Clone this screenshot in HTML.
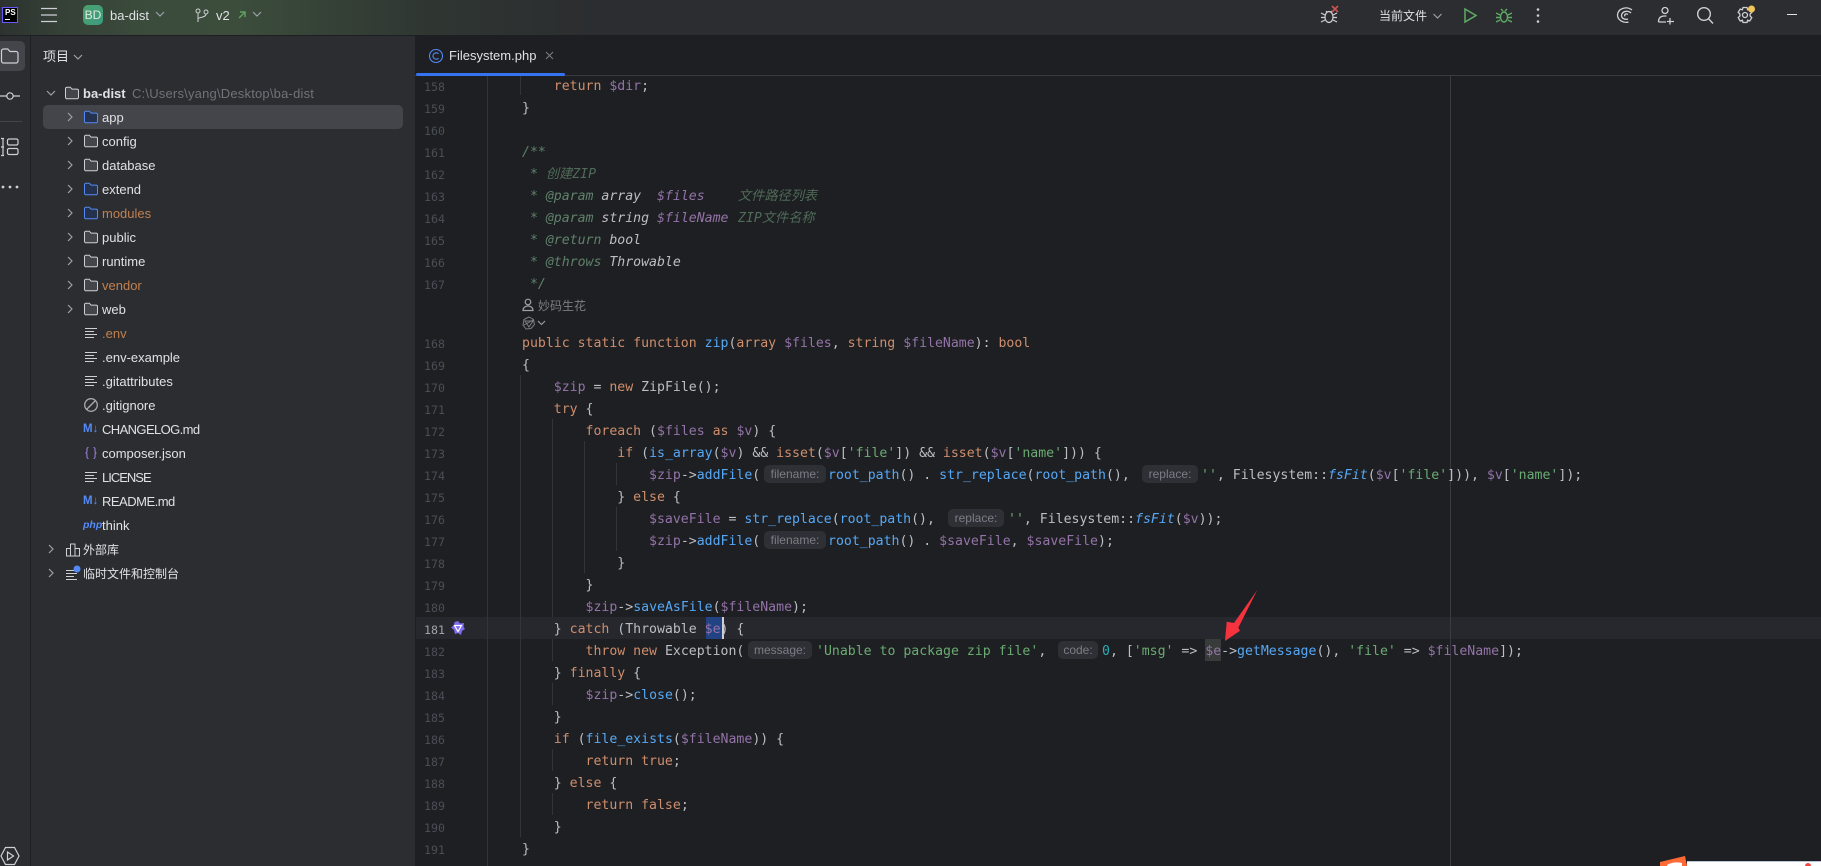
<!DOCTYPE html>
<html lang="zh"><head><meta charset="utf-8"><title>ba-dist – Filesystem.php</title>
<style>
html,body{margin:0;padding:0;background:#1e1f22}
#r{position:relative;width:1821px;height:866px;overflow:hidden;background:#1e1f22;font-family:"Liberation Sans","Noto Sans CJK SC",sans-serif;filter:blur(.25px)}
.a{position:absolute}
.a svg,svg.a{display:block}
#top{left:0;top:0;width:1821px;height:35px;background:linear-gradient(90deg,#2d3230 0,#354036 60px,#3b4c3c 150px,#3c4d3c 240px,#354136 330px,#2f3632 430px,#2b2d30 600px);border-bottom:1px solid #1e1f22}
#stripe{left:0;top:36px;width:30px;height:830px;background:#2b2d30;border-right:1px solid #1e1f22}
#panel{left:31px;top:36px;width:384px;height:830px;background:#2b2d30;border-right:1px solid #1e1f22}
.t{position:absolute;white-space:pre;font-size:13px;line-height:24px;height:24px;color:#dfe1e5;margin-top:1px}
.o{color:#c2804f}
.ti{position:absolute;white-space:pre;color:#dfe1e5}
.l,.n,.in{position:absolute;white-space:pre;height:22px;line-height:22px}
.l{font-family:"DejaVu Sans Mono","Noto Sans CJK SC",monospace;font-size:13.2px;color:#bcbec4;margin-top:2px}
.n{left:414px;width:31px;text-align:right;font-family:"DejaVu Sans Mono",monospace;font-size:11.6px;color:#4a4e56;margin-top:2px}
.in{font-family:"Liberation Sans",sans-serif;font-size:12px;color:#7a7e85;background:#2e3035;border-radius:5px;height:18px;line-height:18px;text-align:center}
.k{color:#cf8e6d}.v{color:#9373a8}.f{color:#56a8f5}.s{color:#6aab73}.d{color:#5f826b;font-style:italic}.di{color:#bcbec4;font-style:italic}.dv{color:#9373a8;font-style:italic}.fi{color:#56a8f5;font-style:italic}.c{color:#2aacb8}.dc{color:#4f6b58;font-style:italic}
.g{position:absolute;width:1px;background:#313438}
.md{position:absolute;left:83px;font:bold 11.5px/16px 'Liberation Sans',sans-serif;color:#548af7;white-space:pre}
</style></head><body>
<div id="r">
<svg width="0" height="0" style="position:absolute">
<symbol id="fd" viewBox="0 0 16 16"><path d="M1.5 3.7A1.5 1.5 0 0 1 3 2.2h3.3l1.8 1.9H13a1.5 1.5 0 0 1 1.5 1.5v6.7a1.5 1.5 0 0 1-1.5 1.5H3a1.5 1.5 0 0 1-1.5-1.5z" fill="#43454a" stroke="#ced0d6" stroke-width="1"/></symbol>
<symbol id="fb" viewBox="0 0 16 16"><path d="M1.5 3.7A1.5 1.5 0 0 1 3 2.2h3.3l1.8 1.9H13a1.5 1.5 0 0 1 1.5 1.5v6.7a1.5 1.5 0 0 1-1.5 1.5H3a1.5 1.5 0 0 1-1.5-1.5z" fill="#25324d" stroke="#548af7" stroke-width="1"/></symbol>
<symbol id="tx" viewBox="0 0 16 16"><path d="M2 3.5h12M2 6.5h9M2 9.5h12M2 12.5h9" stroke="#ced0d6" stroke-width="1" fill="none"/></symbol>
<symbol id="cr" viewBox="0 0 10 10"><path d="M3 1l4 4-4 4" fill="none" stroke="#9da0a8" stroke-width="1.2"/></symbol>
<symbol id="cd" viewBox="0 0 10 10"><path d="M1 3l4 4 4-4" fill="none" stroke="#9da0a8" stroke-width="1.2"/></symbol>
</svg>

<div class="a" id="top"></div>
<div class="a" id="stripe"></div>
<div class="a" id="panel"></div>

<!-- title bar -->
<div class="a" style="left:2px;top:7px;width:14px;height:14px;background:#000;border:1px solid #6b57ff"></div>
<div class="a" style="left:5px;top:8px;color:#fff;font:bold 8px/9px 'Liberation Sans',sans-serif">PS</div>
<div class="a" style="left:5px;top:19px;width:5px;height:1px;background:#fff"></div>
<svg class="a" style="left:41px;top:7px" width="17" height="17"><path d="M0 1.5h16M0 8h16M0 14.500h16" stroke="#ced0d6" stroke-width="1.300"/></svg>
<div class="a" style="left:83px;top:5px;width:20px;height:20px;border-radius:5px;background:linear-gradient(135deg,#4aa26e,#3d9a80);color:#dfe8e0;font-size:12px;line-height:20px;text-align:center">BD</div>
<div class="ti" style="left:110px;top:7px;font-size:13px;line-height:18px">ba-dist</div>
<svg class="a" style="left:155px;top:9px" width="10" height="10"><use href="#cd"/></svg>
<svg class="a" style="left:195px;top:8px" width="14" height="15"><g fill="none" stroke="#ced0d6" stroke-width="1"><circle cx="3" cy="3" r="2"/><circle cx="11" cy="4" r="2"/><path d="M3 5v9M3 11c0-2 8-1 8-5"/></g></svg>
<div class="ti" style="left:216px;top:7px;font-size:13px;line-height:18px">v2</div>
<svg class="a" style="left:237px;top:10px" width="10" height="10"><path d="M2 8l6-6M3 2h5v5" fill="none" stroke="#5f9e5f" stroke-width="1.500"/></svg>
<svg class="a" style="left:252px;top:9px" width="10" height="10"><use href="#cd"/></svg>

<!-- right toolbar -->
<svg class="a" style="left:1320px;top:5px" width="20" height="20"><g fill="none" stroke="#ced0d6" stroke-width="1.200"><ellipse cx="9" cy="12" rx="4" ry="5.500"/><path d="M1 8l4 2M1 12.500h4M1 17l4-2M17 8l-4 2M17 12.500h-4M17 17l-4-2M6 6l1.500 1.500M12 6l-1.500 1.500"/></g><path d="M12 1l6 6M18 1l-6 6" stroke="#c75450" stroke-width="1.600"/></svg>
<div class="ti" style="left:1379px;top:6px;font-size:12px;line-height:20px;letter-spacing:0">当前文件</div>
<svg class="a" style="left:1432px;top:11px" width="11" height="10"><use href="#cd"/></svg>
<svg class="a" style="left:1463px;top:7px" width="15" height="17"><path d="M2 2l11 6.500L2 15z" fill="none" stroke="#5fad65" stroke-width="1.500"/></svg>
<svg class="a" style="left:1496px;top:7px" width="16" height="17"><g fill="none" stroke="#5fad65" stroke-width="1.400"><ellipse cx="8" cy="10" rx="3.500" ry="5"/><path d="M0 6l4 2M0 10.500h4M0 15l4-2M16 6l-4 2M16 10.500h-4M16 15l-4-2M5 2l2 2M11 2l-2 2"/></g></svg>
<svg class="a" style="left:1536px;top:7px" width="4" height="17"><circle cx="2" cy="2.500" r="1.300" fill="#ced0d6"/><circle cx="2" cy="8.500" r="1.300" fill="#ced0d6"/><circle cx="2" cy="14.500" r="1.300" fill="#ced0d6"/></svg>
<svg class="a" style="left:1616px;top:6px" width="18" height="18"><g fill="none" stroke="#ced0d6" stroke-width="1.300"><path d="M16 4C11 0 2 2 1.500 9c0 5 6 8.500 11 7"/><path d="M15 7c-3-3-9-2-9.500 2.500C5.500 12.500 9 14 12 13"/><path d="M12 8.500c-2-1.500-4 0-3 1.800"/></g></svg>
<svg class="a" style="left:1657px;top:6px" width="18" height="19"><g fill="none" stroke="#ced0d6" stroke-width="1.300"><circle cx="8" cy="4.500" r="3"/><path d="M1.500 16c0-4 2-6 6-6h2M1.500 16H9M13 12v6.500M10 15.500h7"/></g></svg>
<svg class="a" style="left:1696px;top:6px" width="18" height="19"><g fill="none" stroke="#ced0d6" stroke-width="1.400"><circle cx="8" cy="8" r="6.300"/><path d="M12.500 12.700L17 17.500"/></g></svg>
<svg class="a" style="left:1736px;top:5px" width="20" height="20"><g fill="none" stroke="#ced0d6" stroke-width="1.300"><circle cx="9" cy="10" r="2.500"/><path d="M7 2.500h4l.6 2.300 2.200-.8 2 3.400-1.700 1.600v2l1.700 1.600-2 3.400-2.200-.8L11 17.500H7l-.6-2.300-2.200.8-2-3.400L3.900 11V9L2.200 7.400l2-3.400 2.200.8z"/></g><circle cx="15.500" cy="4" r="3.500" fill="#f2c55c"/></svg>
<div class="a" style="left:1787px;top:14px;width:10px;height:1px;background:#dfe1e5"></div>

<!-- stripe -->
<div class="a" style="left:0;top:41px;width:25px;height:30px;background:#43454a;border-radius:0 5px 5px 0"></div>
<svg class="a" style="left:0;top:47px" width="20" height="18"><path d="M1.500 4a2 2 0 0 1 2-2h4.300l2.200 2.500h6a2 2 0 0 1 2 2V14a2 2 0 0 1-2 2h-12.500a2 2 0 0 1-2-2z" fill="none" stroke="#ced0d6" stroke-width="1.200"/></svg>
<svg class="a" style="left:0;top:88px" width="21" height="16"><g fill="none" stroke="#ced0d6" stroke-width="1.200"><circle cx="10" cy="8" r="3.200"/><path d="M0 8h6.800M13.200 8H20"/></g></svg>
<div class="a" style="left:0;top:121px;width:22px;height:1px;background:#43454a"></div>
<svg class="a" style="left:1px;top:137px" width="18" height="20"><g fill="none" stroke="#ced0d6" stroke-width="1.200"><path d="M2 1.500V18.500M0 1.500h3M0 10h3M0 18.500h3"/><rect x="6.500" y="2" width="10.500" height="6" rx="1.500"/><rect x="6.500" y="11.500" width="10.500" height="6" rx="1.500"/></g></svg>
<svg class="a" style="left:0;top:184px" width="20" height="6"><circle cx="3" cy="3" r="1.400" fill="#ced0d6"/><circle cx="10" cy="3" r="1.400" fill="#ced0d6"/><circle cx="17" cy="3" r="1.400" fill="#ced0d6"/></svg>
<svg class="a" style="left:0;top:846px" width="20" height="20"><g fill="none" stroke="#ced0d6" stroke-width="1.200"><path d="M5.500 1.500h9L19 10l-4.500 8.500h-9L1 10z"/><path d="M7.500 6v8l6-4z"/></g></svg>

<!-- project panel -->
<div class="ti" style="left:43px;top:47px;font-size:13px;line-height:20px">项目</div>
<svg class="a" style="left:73px;top:52px" width="10" height="10"><use href="#cd"/></svg>
<div class="a" style="left:43px;top:105px;width:360px;height:24px;background:#43454a;border-radius:5px"></div>

<svg class="a" style="left:46px;top:88px" width="10" height="10"><use href="#cd"/></svg>
<svg class="a" style="left:64px;top:85px" width="16" height="16"><use href="#fd"/></svg>
<div class="t" style="left:83px;top:81px;font-weight:bold">ba-dist</div>
<div class="t" style="left:132px;top:81px;color:#6f737a;letter-spacing:.2px">C:\Users\yang\Desktop\ba-dist</div>

<svg class="a" style="left:65px;top:112px" width="10" height="10"><use href="#cr"/></svg><svg class="a" style="left:83px;top:109px" width="16" height="16"><use href="#fb"/></svg><div class="t" style="left:102px;top:105px">app</div>
<svg class="a" style="left:65px;top:136px" width="10" height="10"><use href="#cr"/></svg><svg class="a" style="left:83px;top:133px" width="16" height="16"><use href="#fd"/></svg><div class="t" style="left:102px;top:129px">config</div>
<svg class="a" style="left:65px;top:160px" width="10" height="10"><use href="#cr"/></svg><svg class="a" style="left:83px;top:157px" width="16" height="16"><use href="#fd"/></svg><div class="t" style="left:102px;top:153px">database</div>
<svg class="a" style="left:65px;top:184px" width="10" height="10"><use href="#cr"/></svg><svg class="a" style="left:83px;top:181px" width="16" height="16"><use href="#fb"/></svg><div class="t" style="left:102px;top:177px">extend</div>
<svg class="a" style="left:65px;top:208px" width="10" height="10"><use href="#cr"/></svg><svg class="a" style="left:83px;top:205px" width="16" height="16"><use href="#fb"/></svg><div class="t o" style="left:102px;top:201px">modules</div>
<svg class="a" style="left:65px;top:232px" width="10" height="10"><use href="#cr"/></svg><svg class="a" style="left:83px;top:229px" width="16" height="16"><use href="#fd"/></svg><div class="t" style="left:102px;top:225px">public</div>
<svg class="a" style="left:65px;top:256px" width="10" height="10"><use href="#cr"/></svg><svg class="a" style="left:83px;top:253px" width="16" height="16"><use href="#fd"/></svg><div class="t" style="left:102px;top:249px">runtime</div>
<svg class="a" style="left:65px;top:280px" width="10" height="10"><use href="#cr"/></svg><svg class="a" style="left:83px;top:277px" width="16" height="16"><use href="#fd"/></svg><div class="t o" style="left:102px;top:273px">vendor</div>
<svg class="a" style="left:65px;top:304px" width="10" height="10"><use href="#cr"/></svg><svg class="a" style="left:83px;top:301px" width="16" height="16"><use href="#fd"/></svg><div class="t" style="left:102px;top:297px">web</div>

<svg class="a" style="left:83px;top:325px" width="16" height="16"><use href="#tx"/></svg><div class="t o" style="left:102px;top:321px">.env</div>
<svg class="a" style="left:83px;top:349px" width="16" height="16"><use href="#tx"/></svg><div class="t" style="left:102px;top:345px">.env-example</div>
<svg class="a" style="left:83px;top:373px" width="16" height="16"><use href="#tx"/></svg><div class="t" style="left:102px;top:369px">.gitattributes</div>
<svg class="a" style="left:83px;top:397px" width="16" height="16"><g fill="none" stroke="#a8abb0" stroke-width="1.300"><circle cx="8" cy="8" r="6.300"/><path d="M3.500 12.500l9-9"/></g></svg><div class="t" style="left:102px;top:393px">.gitignore</div>
<div class="md" style="top:421px">M↓</div><div class="t" style="left:102px;top:417px;letter-spacing:-.6px">CHANGELOG.md</div>
<svg class="a" style="left:83px;top:445px" width="16" height="16"><g fill="none" stroke="#9a7cd8" stroke-width="1.100"><path d="M5.500 2.500C3.500 2.500 4 4.500 4 6c0 1-.5 2-1.500 2 1 0 1.500 1 1.500 2 0 1.500-.5 3.500 1.500 3.500M10.500 2.500c2 0 1.500 2 1.500 3.500 0 1 .5 2 1.500 2-1 0-1.500 1-1.500 2 0 1.500.5 3.500-1.500 3.500"/></g></svg><div class="t" style="left:102px;top:441px">composer.json</div>
<svg class="a" style="left:83px;top:469px" width="16" height="16"><use href="#tx"/></svg><div class="t" style="left:102px;top:465px;letter-spacing:-1px">LICENSE</div>
<div class="md" style="top:493px">M↓</div><div class="t" style="left:102px;top:489px;letter-spacing:-.5px">README.md</div>
<div class="a" style="left:83px;top:517px;font:italic bold 10.500px/16px 'Liberation Sans',sans-serif;color:#548af7">php</div><div class="t" style="left:102px;top:513px">think</div>

<svg class="a" style="left:46px;top:544px" width="10" height="10"><use href="#cr"/></svg>
<svg class="a" style="left:65px;top:542px" width="16" height="16"><g fill="none" stroke="#ced0d6" stroke-width="1"><rect x="1.500" y="6.500" width="4" height="7.500"/><rect x="5.500" y="2" width="4.500" height="12"/><rect x="10" y="6.500" width="4.500" height="7.500"/></g></svg>
<div class="t" style="left:83px;top:537px;font-size:12px">外部库</div>
<svg class="a" style="left:46px;top:568px" width="10" height="10"><use href="#cr"/></svg>
<svg class="a" style="left:65px;top:565px" width="16" height="17"><path d="M1 5.500h9M1 8.500h11M1 11.500h8M1 14.500h11" stroke="#ced0d6" stroke-width="1" fill="none"/><circle cx="12" cy="4" r="3.500" fill="#548af7"/></svg>
<div class="t" style="left:83px;top:561px;font-size:12px">临时文件和控制台</div>

<!-- tabs -->
<div class="a" style="left:415px;top:75px;width:1406px;height:1px;background:#393b40"></div>
<div class="a" style="left:416px;top:73px;width:149px;height:3px;background:#3574f0;border-radius:2px"></div>
<svg class="a" style="left:428px;top:48px" width="16" height="16"><g fill="none" stroke="#548af7" stroke-width="1.100"><circle cx="8" cy="8" r="6.500"/><path d="M10.500 5.800a3.200 3.200 0 1 0 0 4.400"/></g></svg>
<div class="ti" style="left:449px;top:46px;font-size:13px;line-height:20px">Filesystem.php</div>
<svg class="a" style="left:545px;top:51px" width="9" height="9"><path d="M1 1l7 7M8 1l-7 7" stroke="#7a7e85" stroke-width="1"/></svg>

<!-- editor chrome -->
<div class="a" style="left:416px;top:617px;width:1405px;height:22px;background:#26282e"></div>
<div class="a" style="left:487px;top:76px;width:1px;height:790px;background:#313438"></div>
<div class="a" style="left:1450px;top:76px;width:1px;height:790px;background:#393b40"></div>
<div class="a" style="left:706px;top:617px;width:16px;height:22px;background:#214283"></div>
<div class="a" style="left:722px;top:617px;width:2px;height:22px;background:#ced0d6"></div>
<div class="a" style="left:1205px;top:639px;width:16px;height:22px;background:#373b39"></div>

<div class="g" style="left:520px;top:76px;height:19px"></div>
<div class="g" style="left:520px;top:375px;height:462px"></div>
<div class="g" style="left:552px;top:419px;height:198px"></div>
<div class="g" style="left:552px;top:639px;height:22px"></div>
<div class="g" style="left:552px;top:683px;height:22px"></div>
<div class="g" style="left:552px;top:749px;height:22px"></div>
<div class="g" style="left:552px;top:793px;height:22px"></div>
<div class="g" style="left:584px;top:441px;height:132px"></div>
<div class="g" style="left:616px;top:463px;height:22px"></div>
<div class="g" style="left:616px;top:507px;height:44px"></div>

<!-- line numbers -->
<div class="n" style="top:74px">158</div>
<div class="n" style="top:96px">159</div>
<div class="n" style="top:118px">160</div>
<div class="n" style="top:140px">161</div>
<div class="n" style="top:162px">162</div>
<div class="n" style="top:184px">163</div>
<div class="n" style="top:206px">164</div>
<div class="n" style="top:228px">165</div>
<div class="n" style="top:250px">166</div>
<div class="n" style="top:272px">167</div>
<div class="n" style="top:331px">168</div>
<div class="n" style="top:353px">169</div>
<div class="n" style="top:375px">170</div>
<div class="n" style="top:397px">171</div>
<div class="n" style="top:419px">172</div>
<div class="n" style="top:441px">173</div>
<div class="n" style="top:463px">174</div>
<div class="n" style="top:485px">175</div>
<div class="n" style="top:507px">176</div>
<div class="n" style="top:529px">177</div>
<div class="n" style="top:551px">178</div>
<div class="n" style="top:573px">179</div>
<div class="n" style="top:595px">180</div>
<div class="n" style="top:617px;color:#a1a3ab">181</div>
<div class="n" style="top:639px">182</div>
<div class="n" style="top:661px">183</div>
<div class="n" style="top:683px">184</div>
<div class="n" style="top:705px">185</div>
<div class="n" style="top:727px">186</div>
<div class="n" style="top:749px">187</div>
<div class="n" style="top:771px">188</div>
<div class="n" style="top:793px">189</div>
<div class="n" style="top:815px">190</div>
<div class="n" style="top:837px">191</div>

<svg class="a" style="left:451px;top:621px" width="14" height="14"><path d="M7 0l2 2.500 4-.5-.5 4L14 8l-3 2-1 4-3-2-3 1-1-4L0 6.500 3 4l.5-3z" fill="#7f6cf0"/><path d="M3.500 4.500h7L7 10.500z" fill="none" stroke="#fff" stroke-width="1.200"/></svg>

<!-- code -->
<div class="l" style="left:522px;top:74px">    <span class="k">return</span> <span class="v">$dir</span>;</div>
<div class="l" style="left:522px;top:96px">}</div>
<div class="l d" style="left:522px;top:140px">/**</div>
<div class="l d" style="left:522px;top:162px"> * <span class="dc">创建ZIP</span></div>
<div class="l d" style="left:522px;top:184px"> * @param <span class="di">array</span>  <span class="dv">$files</span></div>
<div class="l dc" style="left:738px;top:184px">文件路径列表</div>
<div class="l d" style="left:522px;top:206px"> * @param <span class="di">string</span> <span class="dv">$fileName</span></div>
<div class="l dc" style="left:738px;top:206px">ZIP文件名称</div>
<div class="l d" style="left:522px;top:228px"> * @return <span class="di">bool</span></div>
<div class="l d" style="left:522px;top:250px"> * @throws <span class="di">Throwable</span></div>
<div class="l d" style="left:522px;top:272px"> */</div>

<svg class="a" style="left:522px;top:298px" width="12" height="14"><g fill="none" stroke="#9da0a8" stroke-width="1.200"><circle cx="6" cy="4" r="2.800"/><path d="M1 12.500c0-6 10-6 10 0z"/></g></svg>
<div class="a" style="left:538px;top:296px;font-size:12px;line-height:20px;color:#7a7e85;white-space:pre">妙码生花</div>
<svg class="a" style="left:522px;top:316px" width="14" height="14"><g fill="none" stroke="#7a7e85" stroke-width="1"><path d="M7 1l4.500 2.500 1 5L9 12.500l-5 .5L1 9l1-5.500zM3 5h8L7 11zM2 9l9-5"/></g></svg>
<svg class="a" style="left:537px;top:319px" width="9" height="8"><path d="M1 2l3.500 3.500L8 2" fill="none" stroke="#9da0a8" stroke-width="1.100"/></svg>

<div class="l" style="left:522px;top:331px"><span class="k">public static function</span> <span class="f">zip</span>(<span class="k">array</span> <span class="v">$files</span>, <span class="k">string</span> <span class="v">$fileName</span>): <span class="k">bool</span></div>
<div class="l" style="left:522px;top:353px">{</div>
<div class="l" style="left:522px;top:375px">    <span class="v">$zip</span> = <span class="k">new</span> ZipFile();</div>
<div class="l" style="left:522px;top:397px">    <span class="k">try</span> {</div>
<div class="l" style="left:522px;top:419px">        <span class="k">foreach</span> (<span class="v">$files</span> <span class="k">as</span> <span class="v">$v</span>) {</div>
<div class="l" style="left:522px;top:441px">            <span class="k">if</span> (<span class="f">is_array</span>(<span class="v">$v</span>) &amp;&amp; <span class="k">isset</span>(<span class="v">$v</span>[<span class="s">'file'</span>]) &amp;&amp; <span class="k">isset</span>(<span class="v">$v</span>[<span class="s">'name'</span>])) {</div>

<div class="l" style="left:522px;top:463px">                <span class="v">$zip</span>-&gt;<span class="f">addFile</span>(</div>
<div class="in" style="left:764px;top:465px;width:62px">filename:</div>
<div class="l" style="left:828px;top:463px"><span class="f">root_path</span>() . <span class="f">str_replace</span>(<span class="f">root_path</span>(),</div>
<div class="in" style="left:1142px;top:465px;width:56px">replace:</div>
<div class="l" style="left:1201px;top:463px"><span class="s">''</span>, Filesystem::<span class="fi">fsFit</span>(<span class="v">$v</span>[<span class="s">'file'</span>])), <span class="v">$v</span>[<span class="s">'name'</span>]);</div>

<div class="l" style="left:522px;top:485px">            } <span class="k">else</span> {</div>

<div class="l" style="left:522px;top:507px">                <span class="v">$saveFile</span> = <span class="f">str_replace</span>(<span class="f">root_path</span>(),</div>
<div class="in" style="left:948px;top:509px;width:56px">replace:</div>
<div class="l" style="left:1008px;top:507px"><span class="s">''</span>, Filesystem::<span class="fi">fsFit</span>(<span class="v">$v</span>));</div>

<div class="l" style="left:522px;top:529px">                <span class="v">$zip</span>-&gt;<span class="f">addFile</span>(</div>
<div class="in" style="left:764px;top:531px;width:62px">filename:</div>
<div class="l" style="left:828px;top:529px"><span class="f">root_path</span>() . <span class="v">$saveFile</span>, <span class="v">$saveFile</span>);</div>

<div class="l" style="left:522px;top:551px">            }</div>
<div class="l" style="left:522px;top:573px">        }</div>
<div class="l" style="left:522px;top:595px">        <span class="v">$zip</span>-&gt;<span class="f">saveAsFile</span>(<span class="v">$fileName</span>);</div>
<div class="l" style="left:522px;top:617px">    } <span class="k">catch</span> (Throwable <span class="v">$e</span>) {</div>

<div class="l" style="left:522px;top:639px">        <span class="k">throw new</span> Exception(</div>
<div class="in" style="left:748px;top:641px;width:64px">message:</div>
<div class="l" style="left:816px;top:639px"><span class="s">'Unable to package zip file'</span>,</div>
<div class="in" style="left:1058px;top:641px;width:40px">code:</div>
<div class="l" style="left:1102px;top:639px"><span class="c">0</span>, [<span class="s">'msg'</span> =&gt; <span class="v">$e</span>-&gt;<span class="f">getMessage</span>(), <span class="s">'file'</span> =&gt; <span class="v">$fileName</span>]);</div>

<div class="l" style="left:522px;top:661px">    } <span class="k">finally</span> {</div>
<div class="l" style="left:522px;top:683px">        <span class="v">$zip</span>-&gt;<span class="f">close</span>();</div>
<div class="l" style="left:522px;top:705px">    }</div>
<div class="l" style="left:522px;top:727px">    <span class="k">if</span> (<span class="f">file_exists</span>(<span class="v">$fileName</span>)) {</div>
<div class="l" style="left:522px;top:749px">        <span class="k">return true</span>;</div>
<div class="l" style="left:522px;top:771px">    } <span class="k">else</span> {</div>
<div class="l" style="left:522px;top:793px">        <span class="k">return false</span>;</div>
<div class="l" style="left:522px;top:815px">    }</div>
<div class="l" style="left:522px;top:837px">}</div>

<!-- annotation arrow -->
<svg class="a" style="left:1215px;top:580px" width="50" height="70"><path d="M42.300 10L23.300 47.700l1.700 3L10 61l1.700-19.300L19 43z" fill="#f5333f"/></svg>

<!-- bottom right corner -->
<div class="a" style="left:1687px;top:861px;width:134px;height:5px;background:#fff;border-top:1px solid #b9c6da"></div>
<svg class="a" style="left:1660px;top:856px" width="28" height="10"><path d="M0 6l25-6 2 10H0z" fill="#ff6a36"/><path d="M7 9c5-3 10-3 15-2v3H7z" fill="#fff"/></svg>
<div class="a" style="left:1805px;top:863px;width:6px;height:6px;border-radius:3px;background:#f5433f"></div>
</div>
</body></html>
